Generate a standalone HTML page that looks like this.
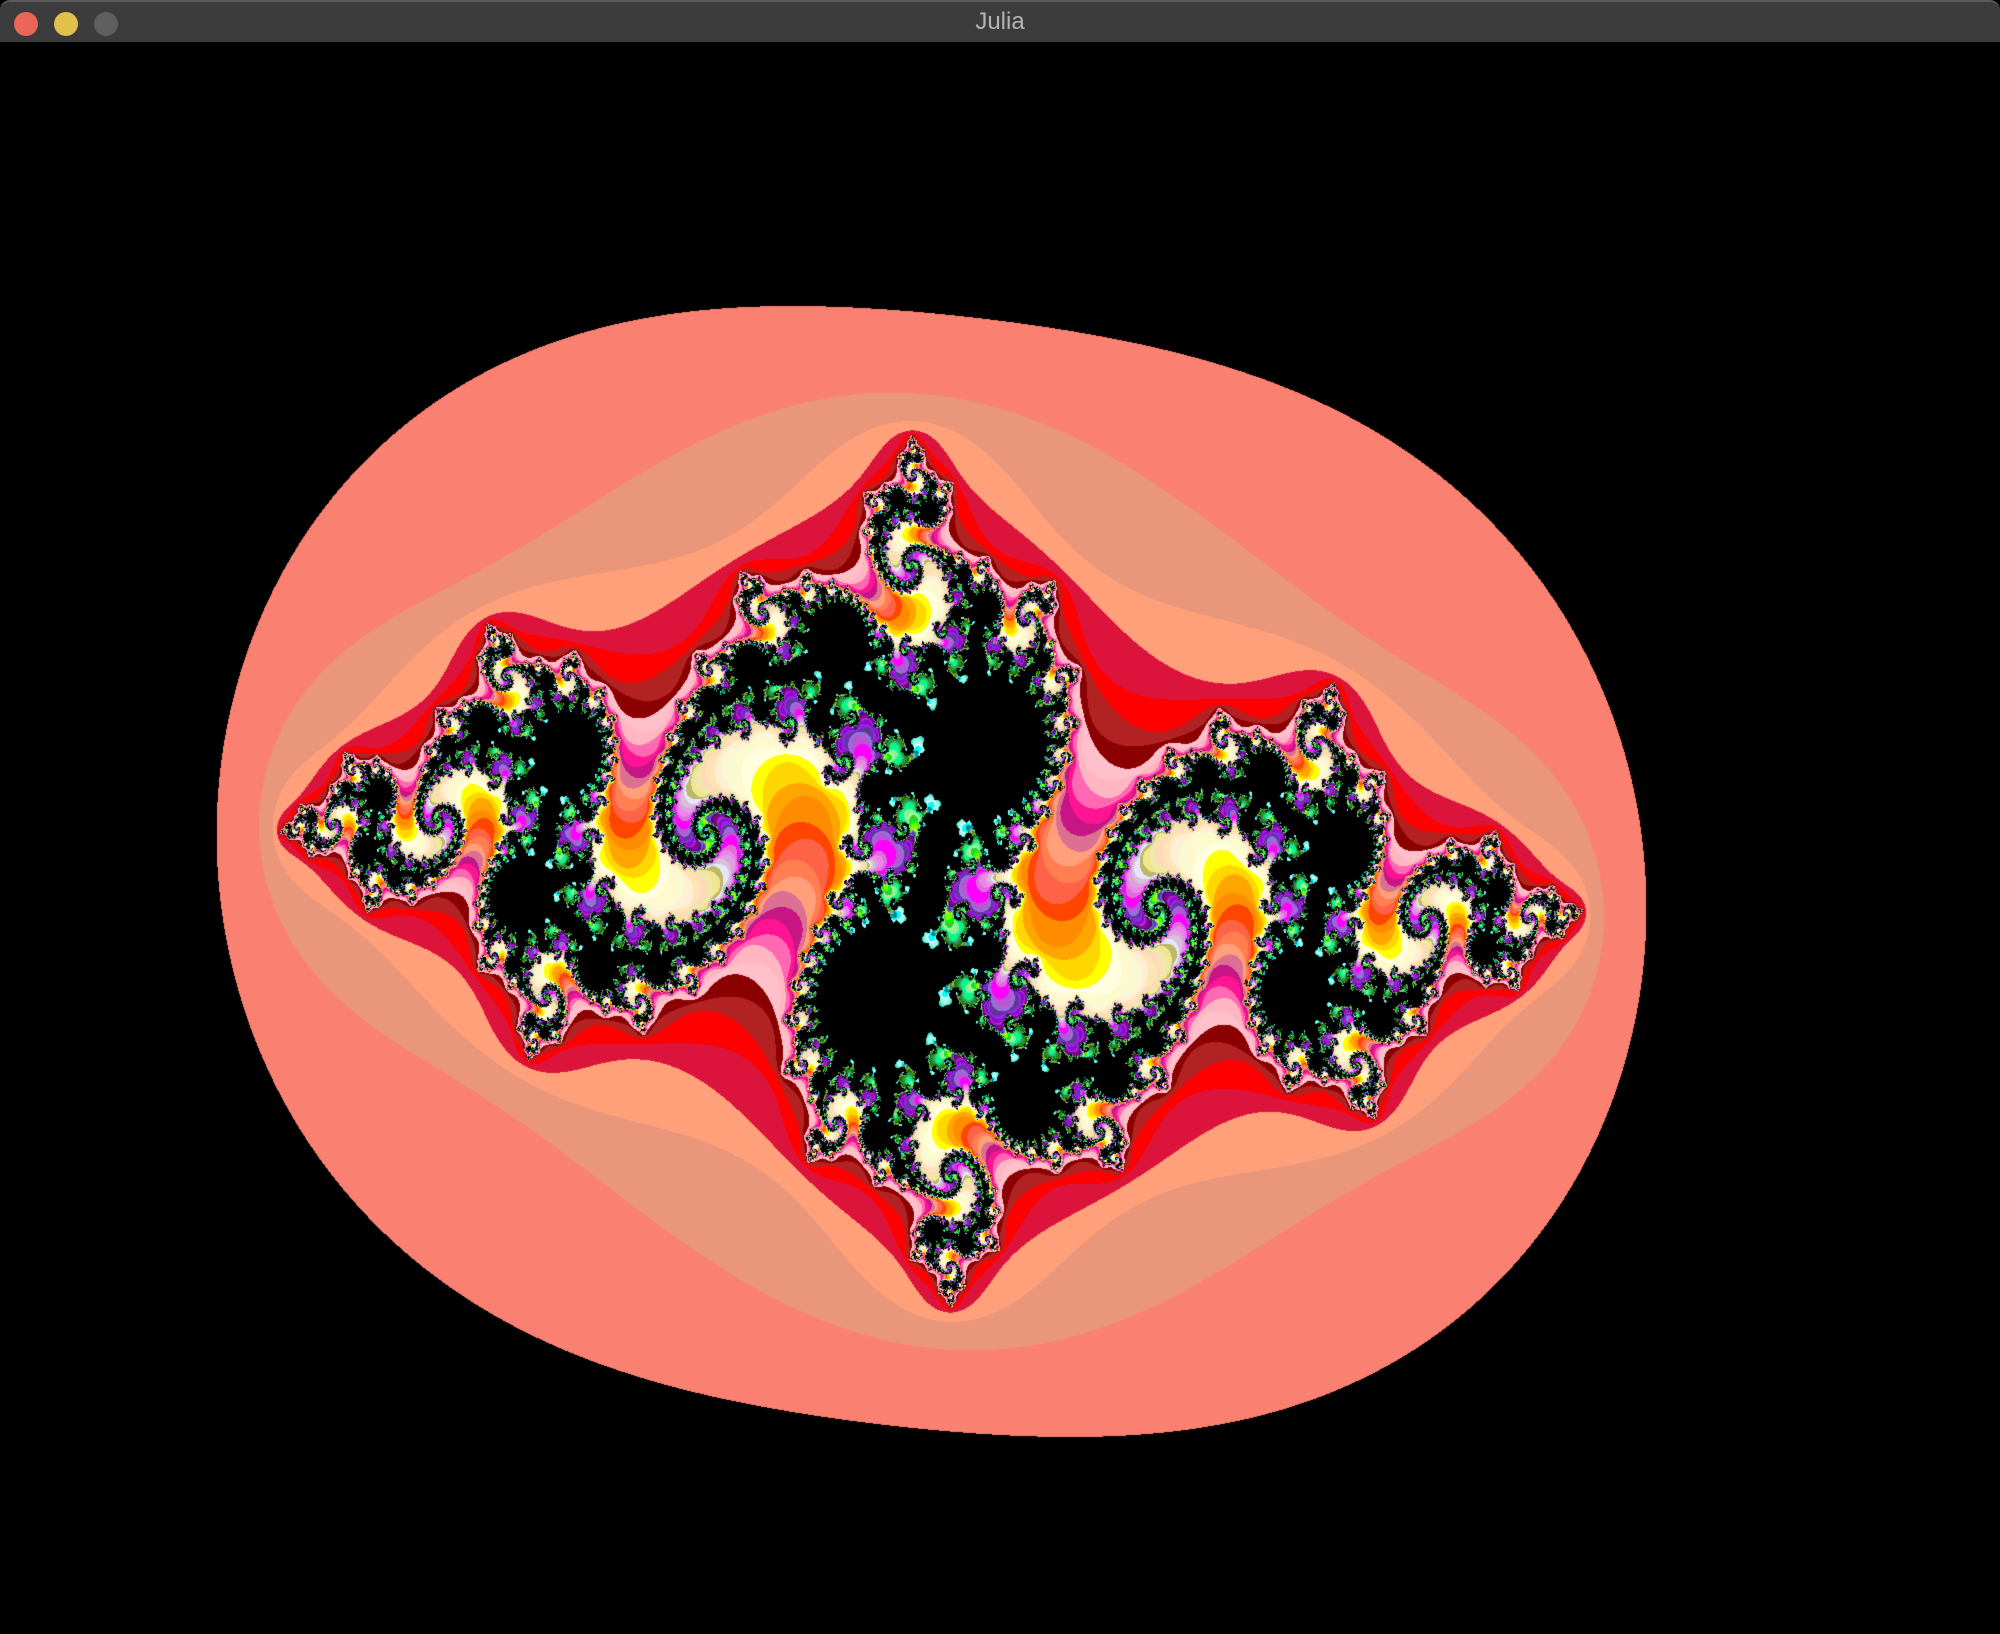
<!DOCTYPE html>
<html><head><meta charset="utf-8"><style>
html,body{margin:0;padding:0;background:#000;width:2000px;height:1634px;overflow:hidden}
#bar{position:absolute;left:0;top:0;width:2000px;height:42px;background:#3c3c3c;border-top:2px solid #5a5a5a;box-sizing:border-box;border-radius:10px 10px 0 0}
.b{position:absolute;top:10px;width:24px;height:24px;border-radius:50%}
#t{position:absolute;left:0;width:2000px;top:6px;text-align:center;color:#b4b4b4;font:24px "Liberation Sans",sans-serif}
canvas{position:absolute;left:0;top:42px}
</style></head><body>
<div id="bar"><div class="b" style="left:14px;background:#ec6559"></div><div class="b" style="left:54px;background:#e0c14c"></div><div class="b" style="left:94px;background:#5f5f5f"></div><div id="t">Julia</div></div>
<canvas id="c" width="2000" height="1592"></canvas>
<script>
var names=["black","black","salmon","darksalmon","lightsalmon","crimson","red","firebrick","darkred","pink","lightpink","hotpink","deeppink","mediumvioletred","palevioletred","lightsalmon","coral","tomato","orangered","darkorange","orange","gold","yellow","lightyellow","lemonchiffon","lightgoldenrodyellow","papayawhip","moccasin","peachpuff","palegoldenrod","khaki","darkkhaki","lavender","thistle","plum","violet","orchid","fuchsia","magenta","mediumorchid","mediumpurple","rebeccapurple","blueviolet","darkviolet","darkorchid","darkmagenta","purple","indigo","slateblue","darkslateblue","mediumslateblue","greenyellow","chartreuse","lawngreen","lime","limegreen","palegreen","lightgreen","mediumspringgreen","springgreen","mediumseagreen","seagreen","forestgreen","green","darkgreen","yellowgreen","olivedrab","olive","darkolivegreen","mediumaquamarine","darkseagreen","lightseagreen","darkcyan","teal","aqua","cyan","lightcyan","paleturquoise","aquamarine","turquoise"];
var cv=document.getElementById('c'),ctx=cv.getContext('2d');
var tmp=document.createElement('canvas');tmp.width=1;tmp.height=1;var tc=tmp.getContext('2d');
var pal=names.map(function(n){tc.fillStyle=n;tc.fillRect(0,0,1,1);var d=tc.getImageData(0,0,1,1).data;return [d[0],d[1],d[2]];});
var W=2000,H=1592,img=ctx.createImageData(W,H),D=img.data;
var cr=-0.8,ci=0.156,cx=931,cy=829,sx=427,sy=511,M=pal.length;
for(var py=0;py<H;py++){for(var px=0;px<W;px++){
var x=(px-cx)/sx,y=(cy-py)/sy,n=0;
while(n<M){var xx=x*x-y*y+cr;y=2*x*y+ci;x=xx;n++;if(x*x+y*y>4)break;}
var col=(n>=M)?[0,0,0]:pal[n];var o=(py*W+px)*4;D[o]=col[0];D[o+1]=col[1];D[o+2]=col[2];D[o+3]=255;}}
ctx.putImageData(img,0,0);
</script>
</body></html>
